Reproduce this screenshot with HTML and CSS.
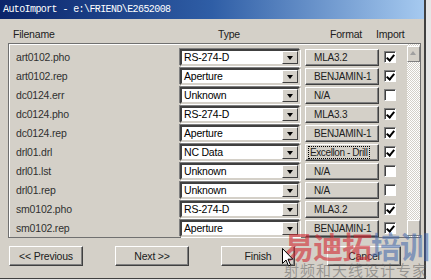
FILE: index.html
```html
<!DOCTYPE html>
<html lang="en">
<head>
    <meta charset="UTF-8">
    <title>AutoImport</title>
    <link rel="stylesheet" href="styles.css">
</head>
<body>
    <div class="window">
        <div class="titlebar">AutoImport - e:\FRIEND\E2652008</div>

        <div class="client">
            <!-- column headings -->
            <div class="heads">
                <span class="h-name">Filename</span>
                <span class="h-type">Type</span>
                <span class="h-format">Format</span>
                <span class="h-import">Import</span>
            </div>

            <!-- file list -->
            <div class="listbox">
                <div class="rows">
                    <div class="row">
                        <span class="fname">art0102.pho</span>
                        <div class="combo"><span>RS-274-D</span><i class="drop"></i></div>
                        <div class="fmt">MLA3.2</div>
                        <div class="chk on"></div>
                    </div>
                    <div class="row">
                        <span class="fname">art0102.rep</span>
                        <div class="combo"><span>Aperture</span><i class="drop"></i></div>
                        <div class="fmt">BENJAMIN-1</div>
                        <div class="chk on"></div>
                    </div>
                    <div class="row">
                        <span class="fname">dc0124.err</span>
                        <div class="combo"><span>Unknown</span><i class="drop"></i></div>
                        <div class="fmt">N/A</div>
                        <div class="chk"></div>
                    </div>
                    <div class="row">
                        <span class="fname">dc0124.pho</span>
                        <div class="combo"><span>RS-274-D</span><i class="drop"></i></div>
                        <div class="fmt">MLA3.3</div>
                        <div class="chk on"></div>
                    </div>
                    <div class="row">
                        <span class="fname">dc0124.rep</span>
                        <div class="combo"><span>Aperture</span><i class="drop"></i></div>
                        <div class="fmt">BENJAMIN-1</div>
                        <div class="chk on"></div>
                    </div>
                    <div class="row">
                        <span class="fname">drl01.drl</span>
                        <div class="combo"><span>NC Data</span><i class="drop"></i></div>
                        <div class="fmt focus"><span>Excellon - Drill</span></div>
                        <div class="chk on"></div>
                    </div>
                    <div class="row">
                        <span class="fname">drl01.lst</span>
                        <div class="combo"><span>Unknown</span><i class="drop"></i></div>
                        <div class="fmt">N/A</div>
                        <div class="chk"></div>
                    </div>
                    <div class="row">
                        <span class="fname">drl01.rep</span>
                        <div class="combo"><span>Unknown</span><i class="drop"></i></div>
                        <div class="fmt">N/A</div>
                        <div class="chk"></div>
                    </div>
                    <div class="row">
                        <span class="fname">sm0102.pho</span>
                        <div class="combo"><span>RS-274-D</span><i class="drop"></i></div>
                        <div class="fmt">MLA3.2</div>
                        <div class="chk on"></div>
                    </div>
                    <div class="row">
                        <span class="fname">sm0102.rep</span>
                        <div class="combo"><span>Aperture</span><i class="drop"></i></div>
                        <div class="fmt">BENJAMIN-1</div>
                        <div class="chk on"></div>
                    </div>
                </div>

                <div class="scroll">
                    <div class="sbtn"><i class="up"></i></div>
                    <div class="sbtn"></div>
                </div>
            </div>

            <!-- wizard buttons -->
            <div class="buttons">
                <div class="btn">&lt;&lt; Previous</div>
                <div class="btn">Next &gt;&gt;</div>
                <div class="btn">Finish</div>
                <div class="btn">Cancel</div>
            </div>

            <!-- watermark over the screenshot -->
            <div class="watermark">
                <div class="wm-big"><span class="wm-red">易迪拓</span><span class="wm-blue">培训</span></div>
                <div class="wm-small">射频和天线设计专家</div>
            </div>

            <svg class="cursor" width="12" height="19" viewBox="0 0 12 19">
                <path d="M0.5 0.5 L0.5 15.5 L4 12 L6.5 18 L8.5 17 L6 11.2 L10.8 11.2 Z" fill="#fff" stroke="#000" stroke-width="1"/>
            </svg>
        </div>
    </div>
</body>
</html>
```

FILE: styles.css
```css
* {
    box-sizing: border-box;
}

body {
    margin: 0;
    background: #e6e6e6;
    font-family: 'Liberation Sans', Arial, sans-serif;
    font-size: 10px;
    letter-spacing: -0.2px;
    color: #000;
}

.window {
    width: 426px;
    height: 279px;
    background: #d4d0c8;
    border-right: 2px solid #404040;
    border-bottom: 1px solid #404040;
}

.titlebar {
    height: 19px;
    padding-left: 3px;
    line-height: 19px;
    color: #fff;
    font-family: 'Liberation Mono', monospace;
    font-size: 10px;
    letter-spacing: -0.6px;
    background: linear-gradient(to right, #0a246a, #2f5ea6 50%, #a6caf0);
}

.client {
    position: relative;
    padding: 0 0 0 8px;
    height: 259px;
}

/* headings */
.heads {
    display: flex;
    height: 24px;
    align-items: center;
    padding-top: 6px;
    color: #202020;
    font-size: 10.5px;
}

.h-name {
    width: 210px;
    padding-left: 5px;
}

.h-type {
    width: 112px;
}

.h-format {
    width: 46px;
}

/* list */
.listbox {
    display: flex;
    width: 413px;
    height: 195px;
    border: 1px solid #707070;
    box-shadow: inset 1px 1px 0 #fff;
}

.rows {
    flex: 1;
    padding-top: 3px;
}

.row {
    display: grid;
    grid-template-columns: 166px 120px 74px 12px;
    column-gap: 5px;
    align-items: center;
    height: 19px;
}

.fname {
    padding-left: 7px;
    color: #303030;
    font-size: 10.5px;
}

.combo {
    display: flex;
    align-items: center;
    height: 17px;
    background: #fff;
    border: 2px solid;
    border-color: #404040 #d4d0c8 #d4d0c8 #404040;
    box-shadow: -1px -1px 0 #808080, 1px 1px 0 #fff;
    margin-top: 1px;
    font-size: 10.5px;
}

.combo span {
    flex: 1;
    padding-left: 2px;
}

.drop {
    position: relative;
    width: 16px;
    height: 13px;
    background: #d4d0c8;
    border: 1px solid;
    border-color: #fff #404040 #404040 #fff;
}

.drop::after {
    content: "";
    position: absolute;
    left: 4px;
    top: 4px;
    border-left: 3px solid transparent;
    border-right: 3px solid transparent;
    border-top: 4px solid #000;
}

.fmt {
    height: 17px;
    line-height: 15px;
    padding-left: 8px;
    margin-top: 1px;
    background: #d4d0c8;
    border: 1px solid;
    border-color: #fff #404040 #404040 #fff;
    box-shadow: inset -1px -1px 0 #808080;
    color: #202020;
    white-space: nowrap;
    overflow: hidden;
}

.fmt.focus {
    padding-left: 2px;
    letter-spacing: -0.4px;
}

.fmt.focus span {
    border: 1px dotted #000;
    padding: 0 1px;
}

.chk {
    position: relative;
    width: 12px;
    height: 12px;
    background: #fff;
    border: 1px solid;
    border-color: #808080 #fff #fff #808080;
    box-shadow: inset 1px 1px 0 #404040;
}

.chk.on::after {
    content: "";
    position: absolute;
    left: 3px;
    top: 1px;
    width: 3px;
    height: 6px;
    border-right: 2px solid #000;
    border-bottom: 2px solid #000;
    transform: rotate(40deg);
}

.scroll {
    width: 13px;
    margin-left: auto;
    display: flex;
    flex-direction: column;
    justify-content: space-between;
    padding: 2px 0 1px;
    background-color: #ece9e4;
    background-image: repeating-conic-gradient(#d4d0c8 0 25%, #fff 0 50%);
    background-size: 2px 2px;
}

.sbtn {
    position: relative;
    height: 16px;
    background: #d4d0c8;
    border: 1px solid;
    border-color: #fff #808080 #808080 #fff;
}

.up {
    position: absolute;
    left: 2px;
    top: 4px;
    border-left: 3px solid transparent;
    border-right: 3px solid transparent;
    border-bottom: 4px solid #a0a0a0;
}

/* bottom buttons */
.buttons {
    display: flex;
    gap: 32px;
    padding: 8px 0 0 1px;
}

.btn {
    width: 74px;
    height: 20px;
    line-height: 18px;
    text-align: center;
    background: #d4d0c8;
    border: 1px solid;
    border-color: #fff #404040 #404040 #fff;
    box-shadow: inset -1px -1px 0 #808080;
    color: #202020;
    font-size: 10.5px;
}

/* watermark */
.watermark {
    position: absolute;
    left: 284px;
    top: 210px;
    pointer-events: none;
    font-family: 'Noto Sans CJK SC', sans-serif;
    white-space: nowrap;
    letter-spacing: 0;
}

.wm-big {
    font-size: 30px;
    font-weight: bold;
    line-height: 32px;
    letter-spacing: -1px;
}

.wm-red {
    color: rgba(210, 40, 50, 0.6);
}

.wm-blue {
    color: rgba(60, 100, 170, 0.55);
}

.wm-small {
    font-size: 15px;
    line-height: 17px;
    color: rgba(90, 90, 90, 0.5);
    letter-spacing: 1px;
}

.cursor {
    position: absolute;
    left: 282px;
    top: 229px;
}
```
